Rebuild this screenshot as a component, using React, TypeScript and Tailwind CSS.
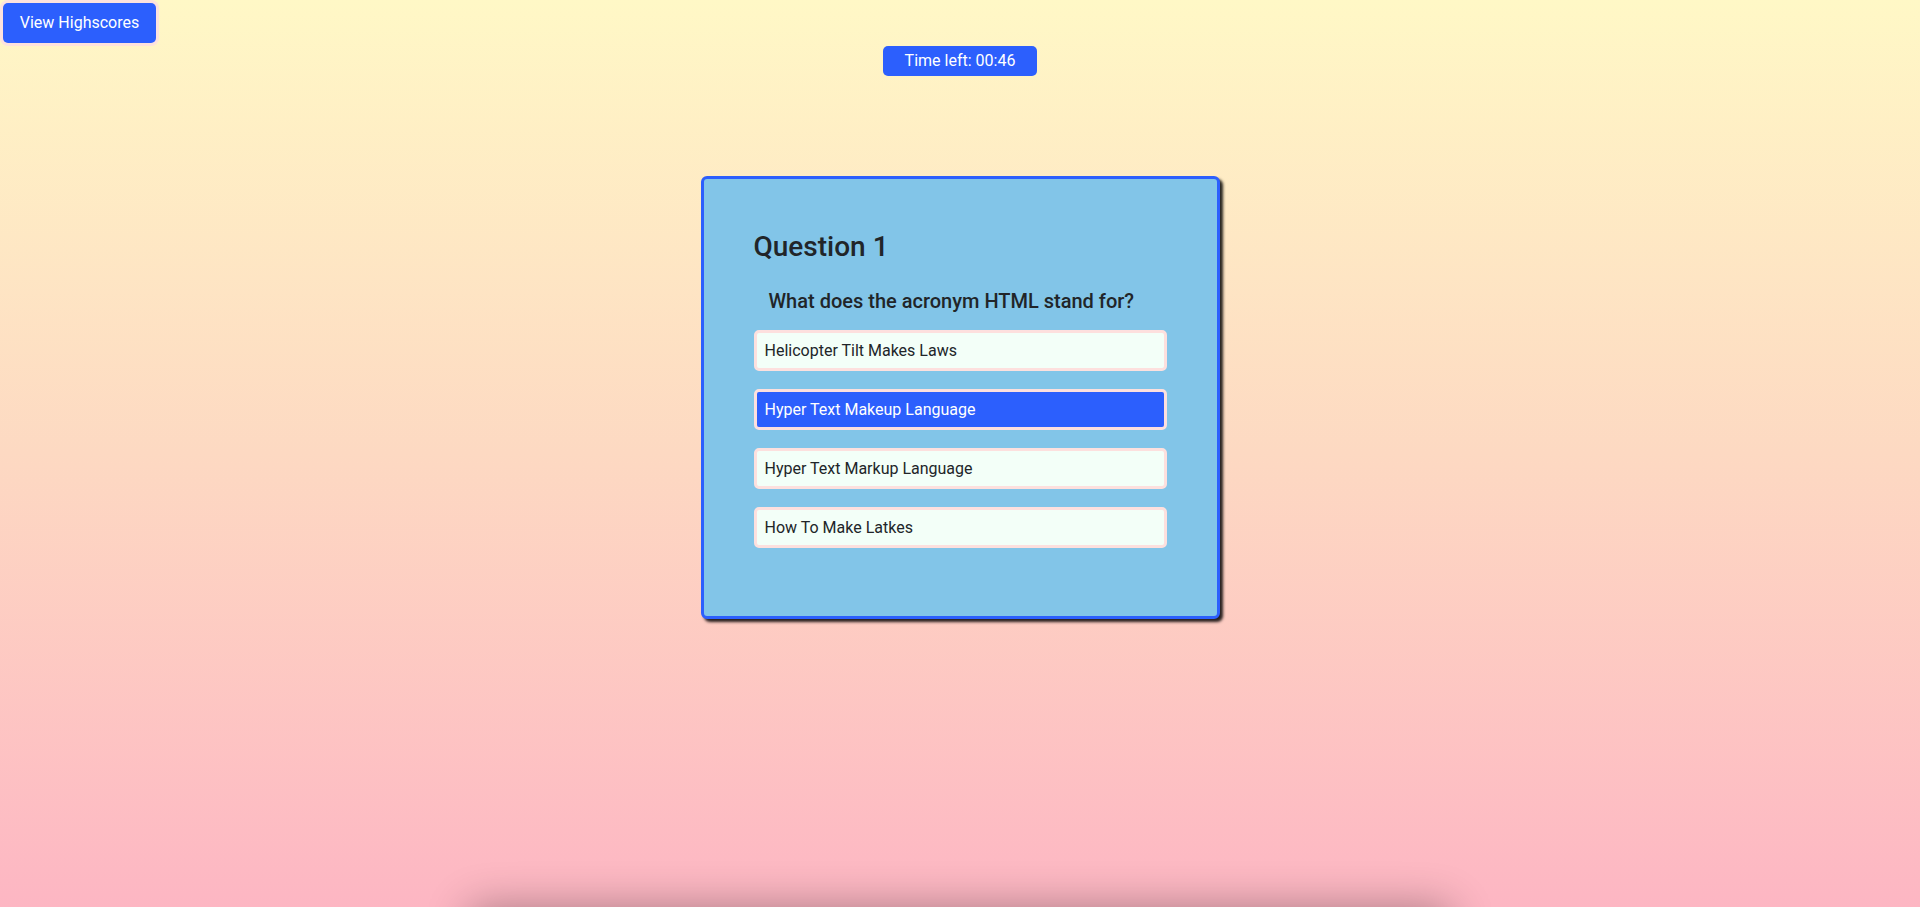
import { useState } from "react";

const ANSWERS = [
  "Helicopter Tilt Makes Laws",
  "Hyper Text Makeup Language",
  "Hyper Text Markup Language",
  "How To Make Latkes",
];

export default function App() {
  const [selected, setSelected] = useState(1);

  return (
    <div
      className="h-[907px] overflow-hidden flex flex-col bg-gradient-to-b from-[#fff8c6] via-[#fdd9c2] to-[#fdb6c3] text-[#212529]"
      style={{ fontFamily: "Roboto, 'Noto Sans', sans-serif" }}
    >
      {/* Highscores link */}
      <div className="shrink-0">
        <button className="ml-[3px] mt-[3px] h-[40px] w-[153px] rounded-[5px] bg-[#2c5ffd] text-white text-[16px] shadow-[0_0_0_3px_#fde2de]">
          View Highscores
        </button>
      </div>

      {/* Timer */}
      <div className="shrink-0 flex justify-center mt-[3px]">
        <div className="w-[154px] h-[30px] rounded-[5px] bg-[#2c5ffd] text-white text-[16px] flex items-center justify-center">
          Time left: 00:46
        </div>
      </div>

      {/* Question card */}
      <div className="shrink-0 flex justify-center mt-[100px]">
        <div className="w-[519px] h-[443px] rounded-[6px] border-[3px] border-[#2c5ffd] bg-[#82c5e8] shadow-[3px_3px_3px_rgba(0,0,0,0.85)] pt-[51px] px-[50px]">
          <h3 className="text-[28px] leading-[1.2] font-medium">Question 1</h3>
          <p className="mt-[25px] ml-[15px] text-[20px] leading-[1.2] font-medium">
            What does the acronym HTML stand for?
          </p>
          <div className="mt-[17px] flex flex-col gap-[18px]">
            {ANSWERS.map((a, i) => (
              <button
                key={a}
                onClick={() => setSelected(i)}
                className={
                  i === selected
                    ? "h-[41px] w-full rounded-[5px] border-[3px] border-[#fde0de] bg-[#2c5ffd] text-white text-left pl-[8px] pt-[1px] text-[16px]"
                    : "h-[41px] w-full rounded-[5px] border-[3px] border-[#fde0de] bg-[#f3fff8] text-[#212529] text-left pl-[8px] pt-[1px] text-[16px]"
                }
              >
                {a}
              </button>
            ))}
          </div>
        </div>
      </div>

      {/* Element below the fold, only its shadow shows */}
      <div className="mt-auto shrink-0 flex justify-center mb-[-100px]">
        <div className="w-[980px] h-[100px] bg-[#fdb6c3] shadow-[0_0_44px_rgba(0,0,0,0.32)]" />
      </div>
    </div>
  );
}
